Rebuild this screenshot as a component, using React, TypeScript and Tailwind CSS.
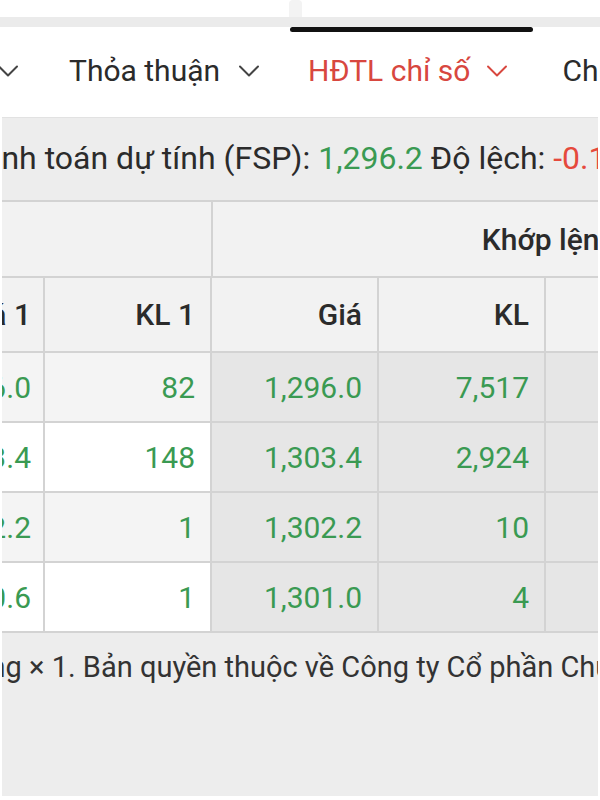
import { ChevronDown } from "lucide-react";

const green = "text-[#3a9a52]";

const rows = [
  { bid: "1,296.0", bidVol: "82", price: "1,296.0", vol: "7,517" },
  { bid: "1,303.4", bidVol: "148", price: "1,303.4", vol: "2,924" },
  { bid: "1,302.2", bidVol: "1", price: "1,302.2", vol: "10" },
  { bid: "1,300.6", bidVol: "1", price: "1,301.0", vol: "4" },
];

const Chevron = ({ className = "" }: { className?: string }) => (
  <ChevronDown size={36} strokeWidth={1.3} className={className} />
);

export default function App() {
  return (
    <div className="w-[600px] h-[800px] overflow-hidden bg-white font-['Roboto',sans-serif] text-[#2b2b2b]">
      {/* horizontal scroller strip */}
      <div className="h-[17px] flex">
        <div className="ml-[289px] w-[13px] h-[17px] bg-[#f3f3f3] rounded-t-sm" />
      </div>
      <div className="h-[10px] bg-[#ebebeb]" />
      <div className="h-[5px] ml-[290px] w-[243px] bg-[#111] rounded-full" />

      {/* tabs */}
      <div className="h-[85px] pb-[8px] flex items-center whitespace-nowrap text-[30px] leading-none">
        <Chevron className="ml-[-10px] shrink-0 text-[#444]" />
        <div className="ml-[43px] flex items-center gap-[11px] shrink-0">
          <span>Thỏa thuận</span>
          <Chevron className="text-[#444]" />
        </div>
        <div className="ml-[41px] flex items-center gap-[9px] shrink-0 text-[#d8473f]">
          <span>HĐTL chỉ số</span>
          <Chevron />
        </div>
        <div className="ml-[47px] shrink-0">Chứng quyền</div>
      </div>

      <div className="bg-[#ededed] border-l-2 border-r-2 border-white overflow-hidden">
        {/* FSP line */}
        <div className="h-[83px] pb-[3px] flex items-center whitespace-nowrap text-[32px] border-t border-[#e2e2e2]">
          <span className="ml-[-101px]">
            Giá thanh toán dự tính (FSP):{" "}
            <span className={green}>1,296.2</span> Độ lệch:{" "}
            <span className="text-[#e5493c]">-0.16</span>
          </span>
        </div>

        {/* table */}
        <div className="ml-[-124px] whitespace-nowrap text-[30px] border-t-2 border-[#d3d3d3]">
          <div className="flex h-[76px] bg-[#f2f2f2] border-b-2 border-[#d3d3d3]">
            <div className="w-[335px] shrink-0 border-r-2 border-[#d3d3d3]" />
            <div className="w-[672px] shrink-0 flex items-center justify-center font-medium">
              Khớp lệnh
            </div>
          </div>
          <div className="flex h-[75px] bg-[#f2f2f2] border-b-2 border-[#d3d3d3] font-medium">
            {["Giá 1", "KL 1", "Giá", "KL", "+/-"].map((h, i) => (
              <div
                key={i}
                className={`w-[167px] shrink-0 flex items-center justify-end border-r-2 border-[#d3d3d3] ${i === 0 ? "pr-[12px]" : "pr-[15px]"}`}
              >
                {i < 4 ? h : ""}
              </div>
            ))}
          </div>
          {rows.map((r, i) => {
            const side = i % 2 === 0 ? "bg-[#f4f4f4]" : "bg-white";
            return (
              <div key={i} className={`flex h-[70px] border-b-2 border-[#d3d3d3] ${green}`}>
                <div className={`w-[167px] shrink-0 flex items-center justify-end pr-[12px] border-r-2 border-[#d3d3d3] ${side}`}>
                  {r.bid}
                </div>
                <div className={`w-[167px] shrink-0 flex items-center justify-end pr-[15px] border-r-2 border-[#d3d3d3] ${side}`}>
                  {r.bidVol}
                </div>
                <div className="w-[167px] shrink-0 flex items-center justify-end pr-[15px] border-r-2 border-[#d3d3d3] bg-[#e6e6e6]">
                  {r.price}
                </div>
                <div className="w-[167px] shrink-0 flex items-center justify-end pr-[15px] border-r-2 border-[#d3d3d3] bg-[#e6e6e6]">
                  {r.vol}
                </div>
                <div className="w-[167px] shrink-0 bg-[#e6e6e6] border-r-2 border-[#d3d3d3]" />
              </div>
            );
          })}
        </div>

        {/* footer */}
        <div className="h-[163px] pt-[13px] whitespace-nowrap text-[29px] text-[#333]">
          <span className="ml-[-203px]">
            Đơn vị khối lượng × 1. Bản quyền thuộc về Công ty Cổ phần Chứng khoán
          </span>
        </div>
      </div>
    </div>
  );
}
